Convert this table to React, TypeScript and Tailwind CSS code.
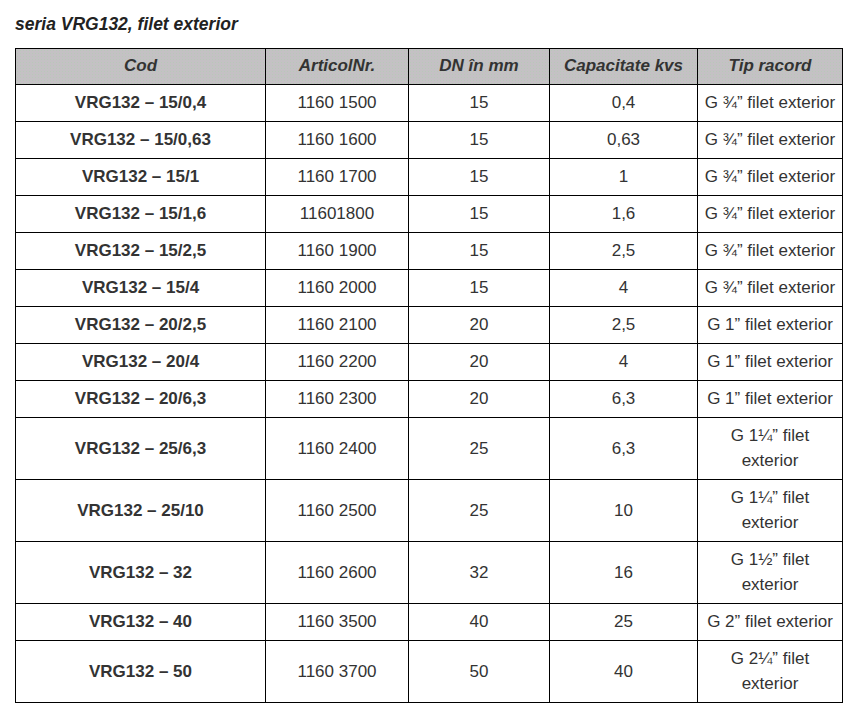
import React from "react";

type Row = { cod: string; art: string; dn: string; kvs: string; tip: string };

const rows: Row[] = [
  { cod: "VRG132 – 15/0,4", art: "1160 1500", dn: "15", kvs: "0,4", tip: "G ¾” filet exterior" },
  { cod: "VRG132 – 15/0,63", art: "1160 1600", dn: "15", kvs: "0,63", tip: "G ¾” filet exterior" },
  { cod: "VRG132 – 15/1", art: "1160 1700", dn: "15", kvs: "1", tip: "G ¾” filet exterior" },
  { cod: "VRG132 – 15/1,6", art: "11601800", dn: "15", kvs: "1,6", tip: "G ¾” filet exterior" },
  { cod: "VRG132 – 15/2,5", art: "1160 1900", dn: "15", kvs: "2,5", tip: "G ¾” filet exterior" },
  { cod: "VRG132 – 15/4", art: "1160 2000", dn: "15", kvs: "4", tip: "G ¾” filet exterior" },
  { cod: "VRG132 – 20/2,5", art: "1160 2100", dn: "20", kvs: "2,5", tip: "G 1” filet exterior" },
  { cod: "VRG132 – 20/4", art: "1160 2200", dn: "20", kvs: "4", tip: "G 1” filet exterior" },
  { cod: "VRG132 – 20/6,3", art: "1160 2300", dn: "20", kvs: "6,3", tip: "G 1” filet exterior" },
  { cod: "VRG132 – 25/6,3", art: "1160 2400", dn: "25", kvs: "6,3", tip: "G 1¼” filet exterior" },
  { cod: "VRG132 – 25/10", art: "1160 2500", dn: "25", kvs: "10", tip: "G 1¼” filet exterior" },
  { cod: "VRG132 – 32", art: "1160 2600", dn: "32", kvs: "16", tip: "G 1½” filet exterior" },
  { cod: "VRG132 – 40", art: "1160 3500", dn: "40", kvs: "25", tip: "G 2” filet exterior" },
  { cod: "VRG132 – 50", art: "1160 3700", dn: "50", kvs: "40", tip: "G 2¼” filet exterior" },
];

export default function App() {
  return (
    <div
      className="bg-white min-h-[722px] w-[854px] text-[#333333]"
      style={{ fontFamily: '"Liberation Sans", Arial, sans-serif' }}
    >
      <div className="pl-[15px] pt-[14px]">
        <p className="text-[17.5px] leading-[20px] font-bold italic text-[#222222] mb-[14px]">
          seria VRG132, filet exterior
        </p>
        <table className="table-fixed border-collapse w-[827px] text-[17px]">
          <colgroup>
            <col className="w-[250px]" />
            <col className="w-[143px]" />
            <col className="w-[141px]" />
            <col className="w-[148px]" />
            <col className="w-[145px]" />
          </colgroup>
          <thead>
            <tr className="bg-[#c4c1c4] bg-[radial-gradient(#b8c8b8_0.6px,transparent_0.8px)] bg-[length:3px_3px]">
              {["Cod", "ArticolNr.", "DN în mm", "Capacitate kvs", "Tip racord"].map((h) => (
                <th
                  key={h}
                  className="border border-black font-bold italic text-center leading-[24px] pt-[5px] pb-[6px] px-[4px] text-[#333333]"
                >
                  {h}
                </th>
              ))}
            </tr>
          </thead>
          <tbody>
            {rows.map((r) => (
              <tr key={r.cod}>
                <td className="border border-black font-bold text-center leading-[25px] pt-[5px] pb-[6px] px-[4px]">
                  {r.cod}
                </td>
                <td className="border border-black text-center leading-[25px] pt-[5px] pb-[6px] px-[4px]">
                  {r.art}
                </td>
                <td className="border border-black text-center leading-[25px] pt-[5px] pb-[6px] px-[4px]">
                  {r.dn}
                </td>
                <td className="border border-black text-center leading-[25px] pt-[5px] pb-[6px] px-[4px]">
                  {r.kvs}
                </td>
                <td className="border border-black text-center leading-[25px] pt-[5px] pb-[6px] px-[4px]">
                  {r.tip}
                </td>
              </tr>
            ))}
          </tbody>
        </table>
      </div>
    </div>
  );
}
